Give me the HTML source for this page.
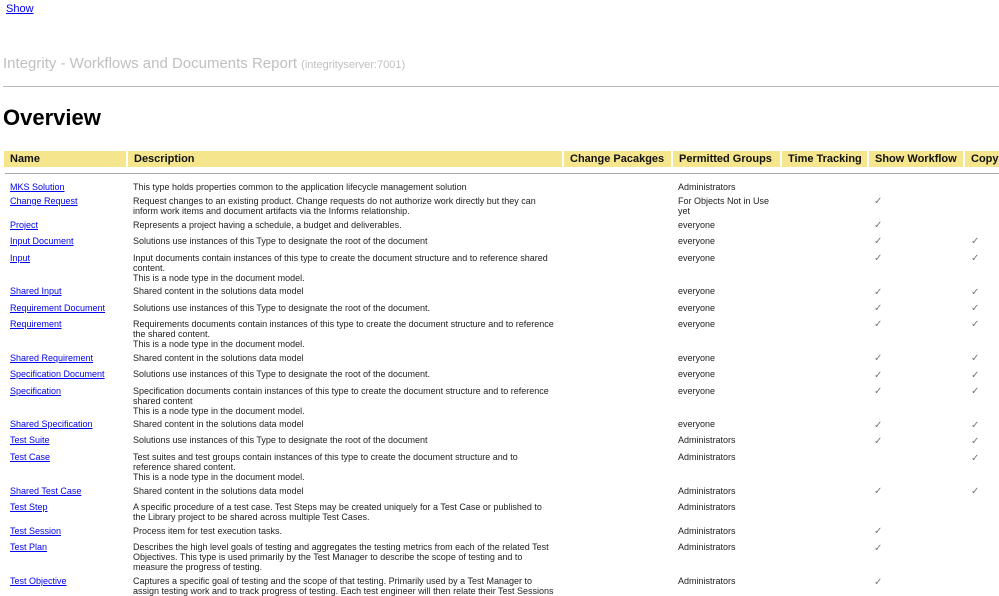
<!DOCTYPE html>
<html><head><meta charset="utf-8"><style>
body{margin:0;width:999px;height:596px;overflow:hidden;background:#fff;font-family:"Liberation Sans",Arial,sans-serif;position:relative}
a{color:#00e;text-decoration:underline}
.a{position:absolute;white-space:nowrap}
.h{position:absolute;top:151px;height:16px;background:#f5e68e;font-weight:bold;font-size:11px;line-height:16px;padding-left:6px;box-sizing:border-box;color:#111;white-space:nowrap;overflow:hidden}
.n{position:absolute;left:10px;font-size:9px;line-height:10px;white-space:nowrap}
.d{position:absolute;left:133px;font-size:9px;line-height:10px;color:#222;white-space:nowrap}
.g{position:absolute;left:678px;font-size:9px;line-height:10px;color:#222;white-space:nowrap}
.c{position:absolute;font-size:10px;line-height:10px;color:#777}
</style></head><body>
<a class="a" style="left:6px;top:3px;font-size:11px">Show</a>
<div class="a" style="left:3px;top:55px;font-size:15px;color:#c0c0c0">Integrity - Workflows and Documents Report <span style="font-size:11px">(integrityserver:7001)</span></div>
<div class="a" style="left:3px;top:86px;width:996px;height:1px;background:#bbb"></div>
<div class="a" style="left:3px;top:105px;font-size:22px;font-weight:bold;color:#000">Overview</div>
<div class="h" style="left:4px;width:122px">Name</div>
<div class="h" style="left:128px;width:434px">Description</div>
<div class="h" style="left:564px;width:107px">Change Pacakges</div>
<div class="h" style="left:673px;width:107px">Permitted Groups</div>
<div class="h" style="left:782px;width:85px">Time Tracking</div>
<div class="h" style="left:869px;width:94px">Show Workflow</div>
<div class="h" style="left:965px;width:34px">Copy</div>
<div class="a" style="left:5px;top:173px;width:994px;height:1px;background:#aaa"></div>

<a class="n" style="top:182px">MKS Solution</a><div class="d" style="top:182px">This type holds properties common to the application lifecycle management solution</div><div class="g" style="top:182px">Administrators</div>

<a class="n" style="top:196px">Change Request</a><div class="d" style="top:196px">Request changes to an existing product. Change requests do not authorize work directly but they can<br>inform work items and document artifacts via the Informs relationship.</div><div class="g" style="top:196px">For Objects Not in Use<br>yet</div><div class="c" style="left:874px;top:197px">✓</div>

<a class="n" style="top:220px">Project</a><div class="d" style="top:220px">Represents a project having a schedule, a budget and deliverables.</div><div class="g" style="top:220px">everyone</div><div class="c" style="left:874px;top:221px">✓</div>

<a class="n" style="top:236px">Input Document</a><div class="d" style="top:236px">Solutions use instances of this Type to designate the root of the document</div><div class="g" style="top:236px">everyone</div><div class="c" style="left:874px;top:237px">✓</div><div class="c" style="left:971px;top:237px">✓</div>

<a class="n" style="top:253px">Input</a><div class="d" style="top:253px">Input documents contain instances of this type to create the document structure and to reference shared<br>content.<br>This is a node type in the document model.</div><div class="g" style="top:253px">everyone</div><div class="c" style="left:874px;top:254px">✓</div><div class="c" style="left:971px;top:254px">✓</div>

<a class="n" style="top:286px">Shared Input</a><div class="d" style="top:286px">Shared content in the solutions data model</div><div class="g" style="top:286px">everyone</div><div class="c" style="left:874px;top:288px">✓</div><div class="c" style="left:971px;top:288px">✓</div>

<a class="n" style="top:303px">Requirement Document</a><div class="d" style="top:303px">Solutions use instances of this Type to designate the root of the document.</div><div class="g" style="top:303px">everyone</div><div class="c" style="left:874px;top:304px">✓</div><div class="c" style="left:971px;top:304px">✓</div>

<a class="n" style="top:319px">Requirement</a><div class="d" style="top:319px">Requirements documents contain instances of this type to create the document structure and to reference<br>the shared content.<br>This is a node type in the document model.</div><div class="g" style="top:319px">everyone</div><div class="c" style="left:874px;top:320px">✓</div><div class="c" style="left:971px;top:320px">✓</div>

<a class="n" style="top:353px">Shared Requirement</a><div class="d" style="top:353px">Shared content in the solutions data model</div><div class="g" style="top:353px">everyone</div><div class="c" style="left:874px;top:354px">✓</div><div class="c" style="left:971px;top:354px">✓</div>

<a class="n" style="top:369px">Specification Document</a><div class="d" style="top:369px">Solutions use instances of this Type to designate the root of the document.</div><div class="g" style="top:369px">everyone</div><div class="c" style="left:874px;top:371px">✓</div><div class="c" style="left:971px;top:371px">✓</div>

<a class="n" style="top:386px">Specification</a><div class="d" style="top:386px">Specification documents contain instances of this type to create the document structure and to reference<br>shared content<br>This is a node type in the document model.</div><div class="g" style="top:386px">everyone</div><div class="c" style="left:874px;top:387px">✓</div><div class="c" style="left:971px;top:387px">✓</div>

<a class="n" style="top:419px">Shared Specification</a><div class="d" style="top:419px">Shared content in the solutions data model</div><div class="g" style="top:419px">everyone</div><div class="c" style="left:874px;top:421px">✓</div><div class="c" style="left:971px;top:421px">✓</div>

<a class="n" style="top:435px">Test Suite</a><div class="d" style="top:435px">Solutions use instances of this Type to designate the root of the document</div><div class="g" style="top:435px">Administrators</div><div class="c" style="left:874px;top:437px">✓</div><div class="c" style="left:971px;top:437px">✓</div>

<a class="n" style="top:452px">Test Case</a><div class="d" style="top:452px">Test suites and test groups contain instances of this type to create the document structure and to<br>reference shared content.<br>This is a node type in the document model.</div><div class="g" style="top:452px">Administrators</div><div class="c" style="left:971px;top:454px">✓</div>

<a class="n" style="top:486px">Shared Test Case</a><div class="d" style="top:486px">Shared content in the solutions data model</div><div class="g" style="top:486px">Administrators</div><div class="c" style="left:874px;top:487px">✓</div><div class="c" style="left:971px;top:487px">✓</div>

<a class="n" style="top:502px">Test Step</a><div class="d" style="top:502px">A specific procedure of a test case. Test Steps may be created uniquely for a Test Case or published to<br>the Library project to be shared across multiple Test Cases.</div><div class="g" style="top:502px">Administrators</div>

<a class="n" style="top:526px">Test Session</a><div class="d" style="top:526px">Process item for test execution tasks.</div><div class="g" style="top:526px">Administrators</div><div class="c" style="left:874px;top:527px">✓</div>

<a class="n" style="top:542px">Test Plan</a><div class="d" style="top:542px">Describes the high level goals of testing and aggregates the testing metrics from each of the related Test<br>Objectives. This type is used primarily by the Test Manager to describe the scope of testing and to<br>measure the progress of testing.</div><div class="g" style="top:542px">Administrators</div><div class="c" style="left:874px;top:544px">✓</div>

<a class="n" style="top:576px">Test Objective</a><div class="d" style="top:576px">Captures a specific goal of testing and the scope of that testing. Primarily used by a Test Manager to<br>assign testing work and to track progress of testing. Each test engineer will then relate their Test Sessions</div><div class="g" style="top:576px">Administrators</div><div class="c" style="left:874px;top:578px">✓</div>
</body></html>
